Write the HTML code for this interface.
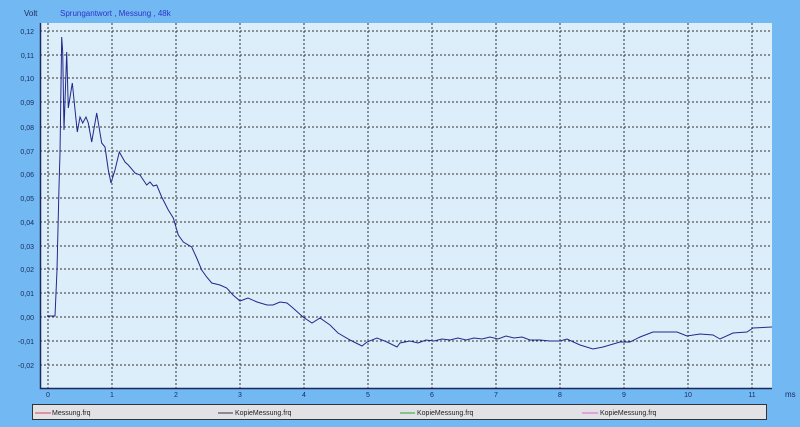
<!DOCTYPE html>
<html><head><style>
body{margin:0;width:800px;height:427px;background:#72b8f2;overflow:hidden;font-family:"Liberation Sans",sans-serif}
</style></head><body>
<svg width="800" height="427" xmlns="http://www.w3.org/2000/svg" style="position:absolute;left:0;top:0">
<rect x="40" y="23" width="732" height="365" fill="#dceefa"/>
<g stroke="#333" stroke-width="1" stroke-dasharray="2,2" fill="none">
<path d="M40 31H772M40 55H772M40 78H772M40 102H772M40 127H772M40 151H772M40 174H772M40 198H772M40 222H772M40 246H772M40 269H772M40 293H772M40 317H772M40 341H772M40 365H772"/>
<path d="M48 23V388M112 23V388M176 23V388M240 23V388M304 23V388M368 23V388M432 23V388M496 23V388M560 23V388M624 23V388M688 23V388M752 23V388"/>
</g>
<path d="M40.5 23V388.5H772" stroke="#1a2a5a" stroke-width="1.5" fill="none"/>
<polyline fill="none" stroke="#24288a" stroke-width="1" points="47,316 55,316 57,270 59,187 60,153 61.7,37 62.7,52 64,130 66.7,52 68.3,108 72.3,83 77.3,132 80,117 82.7,123 86,117 88.3,123 91.7,142 96.7,113 101.7,143 105,147 108.3,170 111,183 115,170 119.3,152 125,162 128.3,165 135,173 140,175 146.7,185 150,182 153.3,186 156.7,185 161.7,197 168.3,210 173.3,218 178.3,235 183.3,242 191.7,247 196.7,258 201.7,270 206.7,277 211.7,283 220,285 226.7,288 233,295 240,301 248,298 257,302 267,305 273,305 280,302 287,303 293,308 303,317 312,323 320,318 330,325 338,333 350,340 362,346 367,342 377,338 387,342 397,347 400,343 410,341 418,343 426,340 434,341 442,339 450,340 458,338 466,340 474,338 482,339 490,337 498,339 506,336 514,338 522,337 530,340 540,340 550,341 560,341 567,339 580,345 593,349 603,347 620,342 630,342 640,337 653,332 677,332 687,336 700,334 713,335 720,339 733,333 747,332 753,328 772,327"/>
<g font-size="7" fill="#1a2a5a" text-anchor="end">
<text x="34" y="34">0,12</text><text x="34" y="58">0,11</text><text x="34" y="81">0,10</text><text x="34" y="105">0,09</text><text x="34" y="130">0,08</text><text x="34" y="154">0,07</text><text x="34" y="177">0,06</text><text x="34" y="201">0,05</text><text x="34" y="225">0,04</text><text x="34" y="249">0,03</text><text x="34" y="272">0,02</text><text x="34" y="296">0,01</text><text x="34" y="320">0,00</text><text x="34" y="344">-0,01</text><text x="34" y="368">-0,02</text>
</g>
<g font-size="7" fill="#1a2a5a" text-anchor="middle">
<text x="48" y="397">0</text><text x="112" y="397">1</text><text x="176" y="397">2</text><text x="240" y="397">3</text><text x="304" y="397">4</text><text x="368" y="397">5</text><text x="432" y="397">6</text><text x="496" y="397">7</text><text x="560" y="397">8</text><text x="624" y="397">9</text><text x="688" y="397">10</text><text x="752" y="397">11</text>
</g>
<text x="785" y="397" font-size="8" fill="#1a2a5a">ms</text>
<text x="24" y="16" font-size="8" fill="#1a2a5a">Volt</text>
<text x="60" y="16" font-size="8" fill="#2b35c8">Sprungantwort , Messung , 48k</text>
<rect x="32.5" y="404.5" width="734" height="15" fill="#e2e2e6" stroke="#333" stroke-width="1"/>
<g font-size="7" fill="#222">
<line x1="35" y1="413" x2="51" y2="413" stroke="#e04050"/><text x="52" y="415">Messung.frq</text>
<line x1="218" y1="413" x2="233" y2="413" stroke="#334"/><text x="235" y="415">KopieMessung.frq</text>
<line x1="400" y1="413" x2="415" y2="413" stroke="#30a030"/><text x="417" y="415">KopieMessung.frq</text>
<line x1="582" y1="413" x2="598" y2="413" stroke="#e060d0"/><text x="600" y="415">KopieMessung.frq</text>
</g>
</svg>
</body></html>
